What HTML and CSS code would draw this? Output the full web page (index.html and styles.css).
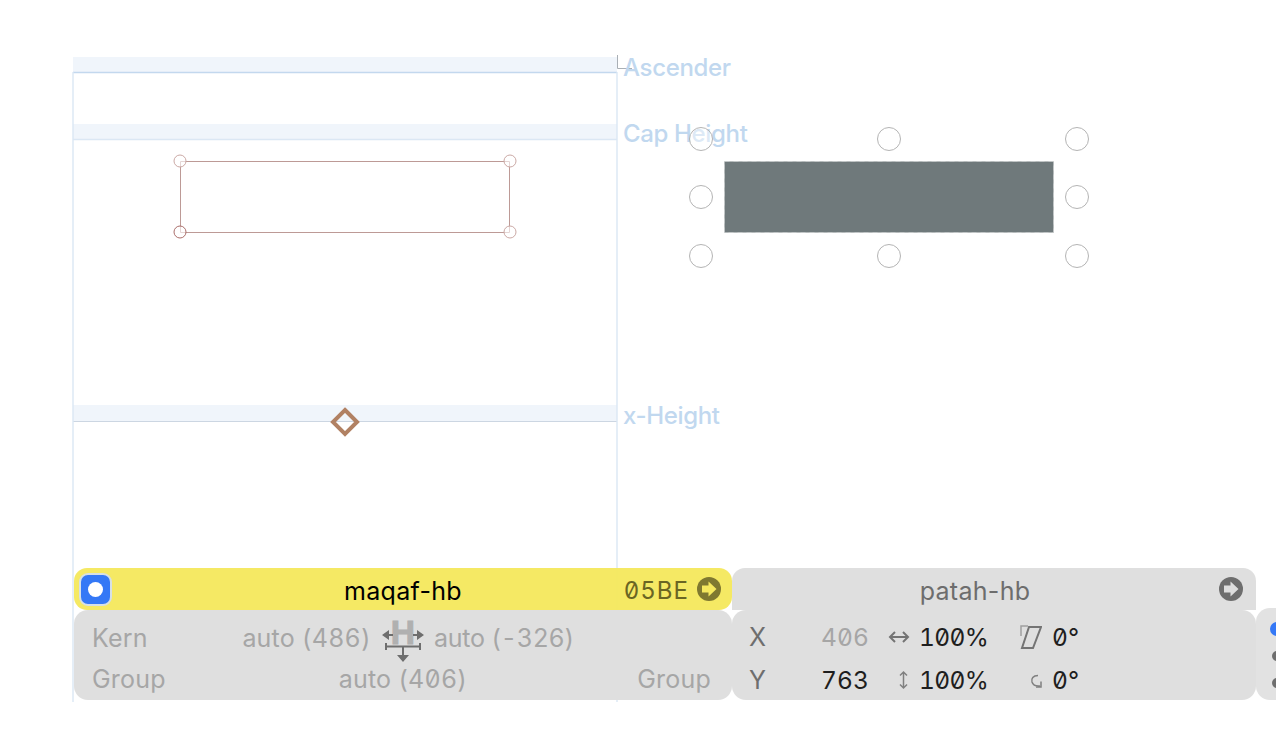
FILE: index.html
```html
<!DOCTYPE html>
<html lang="en">
<head>
<meta charset="utf-8">
<title>Glyph editor</title>
<link rel="stylesheet" href="styles.css">
</head>
<body>
<main class="editor">
  <section class="canvas">
    <svg class="art" width="1276" height="700" viewBox="0 0 1276 700">
      <rect class="band" x="73" y="57" width="544" height="15"/>
      <rect class="band" x="73" y="124" width="544" height="15"/>
      <rect class="band" x="73" y="405" width="544" height="16"/>
      <path class="guide-strong" d="M73 72.5H617"/>
      <path class="guide-soft" d="M73 139.5H617"/>
      <path class="guide-gray" d="M73 421.5H617"/>
      <path class="guide-soft" d="M73 72V702M617 72V702"/>
      <path class="mark" d="M617.5 55V68.5H632"/>
      <path class="outline" d="M180.5 161.5H509.5V232.5H180.5Z"/>
      <circle class="node" cx="180" cy="161" r="6"/>
      <circle class="node" cx="510" cy="161" r="6"/>
      <circle class="node" cx="510" cy="232" r="6"/>
      <circle class="node first" cx="180" cy="232" r="6"/>
      <path class="anchor" d="M345 410L357 422L345 434L333 422Z"/>
      <rect class="shape" x="724.500" y="161.500" width="329" height="71"/>
    </svg>
    <span class="metric ascender">Ascender</span>
    <span class="metric cap">Cap Height</span>
    <span class="metric xh">x-Height</span>
    <svg class="handles" width="1276" height="300" viewBox="0 0 1276 300">
      <circle cx="701" cy="139" r="11.5"/><circle cx="889" cy="139" r="11.5"/><circle cx="1077" cy="139" r="11.5"/>
      <circle cx="701" cy="197" r="11.5"/><circle cx="1077" cy="197" r="11.5"/>
      <circle cx="701" cy="256" r="11.5"/><circle cx="889" cy="256" r="11.5"/><circle cx="1077" cy="256" r="11.5"/>
    </svg>
  </section>

  <section class="inspector">
    <div class="glyph-head current">
      <span class="radio"><span class="radio-dot"></span></span>
      <span class="glyph-name">maqaf-hb</span>
      <span class="unicode">05BE</span>
      <svg class="go" width="24" height="24" viewBox="0 0 24 24"><circle class="go-disc-y" cx="12" cy="12" r="12"/><path class="go-arrow-y" d="M5 8.5H11.5V4.5L19.5 12L11.5 19.5V15.5H5Z"/></svg>
    </div>
    <div class="glyph-head next">
      <span class="glyph-name">patah-hb</span>
      <svg class="go" width="24" height="24" viewBox="0 0 24 24"><circle class="go-disc-g" cx="12" cy="12" r="12"/><path class="go-arrow-g" d="M5 8.5H11.5V4.5L19.5 12L11.5 19.5V15.5H5Z"/></svg>
    </div>

    <div class="panel metrics">
      <div class="kern-row">
        <span class="kern-left"><span>Kern</span><span class="tab">auto (486)</span></span>
        <svg class="kern-icon" width="42" height="44" viewBox="0 0 42 44">
          <text class="kern-h" x="21" y="27">H</text>
          <path class="kern-line" d="M4 18H11M31 18H38M4 29.500H38M4 26V33M38 26V33M21 29.500V40"/>
          <path class="kern-head" d="M0 18L7 13V23ZM42 18L35 13V23ZM15 38H27L21 45Z"/>
        </svg>
        <span class="tab kern-right">auto (-326)</span>
      </div>
      <div class="group-row">
        <span>Group</span>
        <span class="tab">auto (406)</span>
        <span class="group-right">Group</span>
      </div>
    </div>

    <div class="panel transform">
      <div class="tf-row">
        <span class="tf-pos"><span class="axis">X</span><span class="num dim">406</span></span>
        <svg class="tf-icon" width="22" height="22" viewBox="0 0 22 22"><path class="ico" d="M2 11H20M7 6L2 11L7 16M15 6L20 11L15 16"/></svg>
        <span class="num pct">100%</span>
        <svg class="tf-icon" width="22" height="25" viewBox="0 0 22 25"><path class="ico" d="M9 2H21L13 23H2Z"/><path class="ico light" d="M1 11V1H8"/></svg>
        <span class="num">0°</span>
      </div>
      <div class="tf-row">
        <span class="tf-pos"><span class="axis">Y</span><span class="num">763</span></span>
        <svg class="tf-icon" width="22" height="22" viewBox="0 0 22 22"><path class="ico thin" d="M15.500 3V19M12 6.500L15.500 3L19 6.500M12 15.500L15.500 19L19 15.500"/></svg>
        <span class="num pct">100%</span>
        <svg class="tf-icon" width="22" height="22" viewBox="0 0 22 22"><path class="ico thin" d="M18 6.500C13 6.500 11 9.500 12 13C13 16 15.500 17.500 20 17M21 12.500V18H16"/></svg>
        <span class="num">0°</span>
      </div>
    </div>

    <div class="panel layers">
      <span class="layer-dot active"></span>
      <span class="layer-dot"></span>
      <span class="layer-dot"></span>
    </div>
  </section>
</main>
</body>
</html>
```
FILE: styles.css
```css
* { box-sizing: border-box; }
html, body { margin: 0; height: 730px; overflow: hidden; background: #fff; }
body { font-family: Inter, "Liberation Sans", sans-serif; font-size: 24px; line-height: 30px; }
.editor { width: 1276px; height: 730px; overflow: hidden; }

.canvas { position: relative; height: 568px; }
.art, .handles { position: absolute; left: 0; top: 0; overflow: visible; }
.handles { fill: none; stroke: #b4b4b4; stroke-width: 1; }
.handles circle { fill: rgba(255,255,255,.45); }
.band { fill: #f0f5fb; }
.guide-strong, .guide-soft, .guide-gray, .mark, .outline, .node, .anchor, .shape { fill: none; }
.guide-strong { stroke: #c3d8ee; stroke-width: 1.4; }
.guide-soft { stroke: #dbe7f4; stroke-width: 1.4; }
.guide-gray { stroke: #ccd6e2; }
.mark { stroke: #a9afb5; }
.outline { stroke: #bd9a96; }
.node { stroke: #cba9a5; fill: rgba(255,255,255,.6); }
.node.first { stroke: #ab6f6b; }
.anchor { stroke: #b18163; stroke-width: 4; }
.shape { fill: #6f797b; stroke: #c2c6c7; stroke-width: 1; stroke-dasharray: 5 4; }

.metric { position: absolute; left: 623px; color: #c1d8ef; font-weight: 500; letter-spacing: -.35px; white-space: nowrap; }
.ascender { top: 53px; }
.cap { top: 119px; }
.xh { top: 401px; }

.inspector {
  display: grid;
  grid-template-columns: 658px 524px 60px;
  grid-template-rows: 42px 90px;
  margin-left: 74px;
  position: relative;
}
.glyph-head { display: flex; align-items: center; position: relative; font-size: 25px; letter-spacing: .3px; }
.current { grid-column: 1; grid-row: 1; background: rgba(245,232,94,.96); border-radius: 13px; padding: 0 11px 0 5px; }
.next { grid-column: 2; grid-row: 1; background: rgba(222,222,222,.97); border-radius: 13px 13px 0 0; padding: 0 13px 0 0; color: #6d6d6d; }
.glyph-name { flex: 1; text-align: center; padding-top: 3px; }
.current .glyph-name { color: #000; position: absolute; left: 0; right: 0; }
.next .glyph-name { margin-right: 1px; }
.radio {
  position: relative;
  width: 33px; height: 33px; border-radius: 9px; background: #3478f6;
  border: 2px solid #d6e0e6; display: flex; align-items: center; justify-content: center;
}
.radio-dot { width: 15px; height: 15px; border-radius: 50%; background: #fff; }
.unicode { position: relative; margin-left: auto; margin-right: 8px; padding-top: 3px; color: #6a6523; font-size: 24px; font-feature-settings: "tnum", "zero"; letter-spacing: 1px; }
.go { flex: none; position: relative; }
.go-disc-y { fill: #7f7830; }
.go-arrow-y { fill: #f5e85e; }
.go-disc-g { fill: #6e6e6e; }
.go-arrow-g { fill: #dedede; }

.panel { background: rgba(222,222,222,.97); }
.metrics { grid-column: 1; grid-row: 2; color: #a6a6a6; padding: 5px 18px 0 18px; border-radius: 14px; font-size: 25px; letter-spacing: .2px; }
.tab { font-feature-settings: "tnum", "zero"; }
.kern-row { display: grid; grid-template-columns: 1fr 42px 1fr; column-gap: 11px; height: 42px; align-items: center; }
.kern-left { display: flex; justify-content: space-between; }
.kern-right { margin-left: -1px; letter-spacing: -.25px; }
.kern-icon { overflow: visible; margin-top: 2px; }
.kern-h { font-family: "Liberation Sans", sans-serif; font-size: 33.500px; font-weight: 700; text-anchor: middle; fill: #b0b0b0; stroke: #b0b0b0; stroke-width: 1; }
.kern-line { stroke: #6e6e6e; stroke-width: 2; fill: none; }
.kern-head { fill: #6e6e6e; }
.group-row { display: grid; grid-template-columns: 1fr auto 1fr; height: 42px; padding-top: 2px; align-items: center; }
.group-right { text-align: right; padding-right: 3px; }

.transform { grid-column: 2; grid-row: 2; padding: 6px 0 0 17px; color: #1e1e1e; border-radius: 14px; }
.tf-row {
  display: grid;
  grid-template-columns: 139px 31px 101px 32px auto;
  height: 42px;
  align-items: center;
}
.tf-row + .tf-row { padding-top: 1px; }
.tf-pos { display: flex; justify-content: space-between; margin-right: 19px; }
.tf-icon { justify-self: start; }
.tf-row > .num { white-space: nowrap; }
.axis { color: #6e6e6e; font-size: 25px; }
.num { font-size: 24.500px; font-feature-settings: "tnum", "zero"; letter-spacing: .1px; }
.num.pct { letter-spacing: -.6px; }
.dim { color: #a6a6a6; }
.ico { fill: none; stroke: #747474; stroke-width: 2; }
.ico.thin { stroke-width: 1.500; stroke: #808080; }
.ico.light { stroke: #a0a0a0; stroke-width: 1.500; }

.layers { grid-column: 3; grid-row: 2; background: #e2e2e2; margin-top: -2px; border-radius: 14px 0 0 14px; padding: 14px 0 0 14px; display: flex; flex-direction: column; }
.layer-dot { width: 10px; height: 10px; border-radius: 50%; background: #6e6e6e; margin: 15px 0 2px 2px; }
.layer-dot.active { width: 14px; height: 14px; background: #3478f6; margin: 0; }
```
